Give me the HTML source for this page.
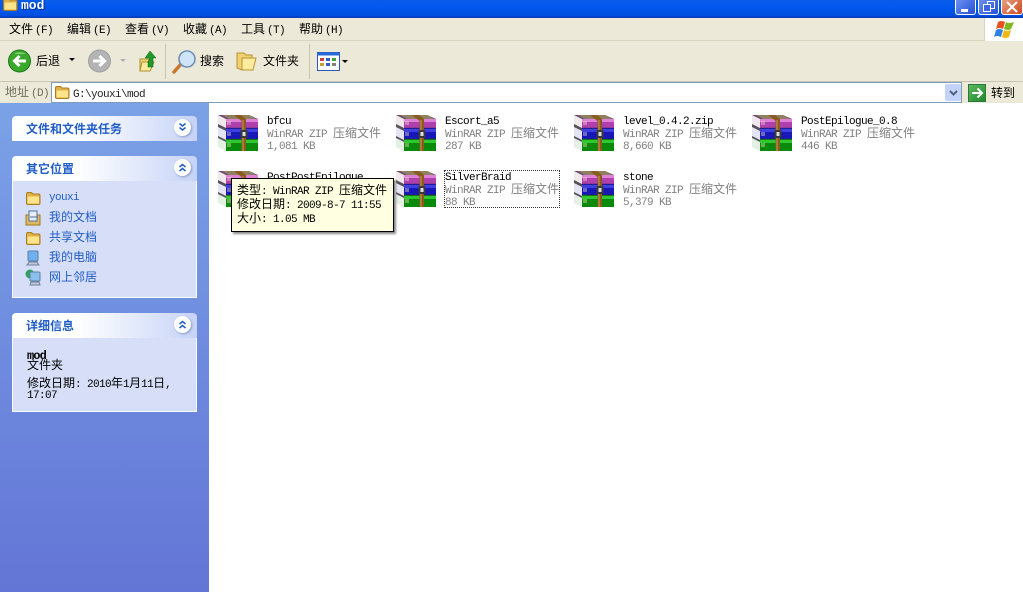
<!DOCTYPE html>
<html><head><meta charset="utf-8">
<style>
html,body{margin:0;padding:0}
body{width:1023px;height:592px;position:relative;overflow:hidden;background:#fff;font-family:"Liberation Mono","Noto Sans CJK SC",monospace;font-size:11px;letter-spacing:-.6px;color:#000}
.a{position:absolute;white-space:nowrap}
i{font-style:normal;font-size:12px;letter-spacing:0;font-family:"Noto Sans CJK SC","WenQuanYi Zen Hei",sans-serif}
.t{line-height:12px}
.m i{margin-right:2px}
svg{position:absolute;overflow:visible}
.panel{position:absolute;left:12px;width:185px}
.head{height:25px;border-radius:4px 4px 0 0;background:linear-gradient(90deg,#fff 0%,#fff 35%,#c6d3f7 100%);position:relative}
.head b{position:absolute;left:14px;top:4px;letter-spacing:0;font:bold 12px/17px "Noto Sans CJK SC","WenQuanYi Zen Hei",sans-serif;color:#215dc6}
.body{background:#d6dff7;border:1px solid #fff;border-top:0;box-sizing:border-box}
.btn{position:absolute;right:6px;top:3px;width:17px;height:17px;border-radius:50%;background:#fff;box-shadow:1px 1px 2px #8a9ac8;border:0}
.btn svg{left:0;top:0}
.gray{color:#808080}
.link{position:absolute;left:36px;color:#215dc6;line-height:14px}
</style></head><body>
<svg width="0" height="0" style="position:absolute"><defs>
<symbol id="rar" viewBox="0 0 42 38">
<path d="M1 1H32L41 5V14H9Z" fill="#6a4a70"/>
<path d="M5 1H32L39 5H12Z" fill="#8f8060"/>
<path d="M9 5H41V14H9Z" fill="#b040b0"/><path d="M9 5H41V8H9Z" fill="#e080d8"/>
<path d="M1 1L9 5V14L1 10Z" fill="#f0e8ea"/>
<path d="M1 13L9 17V26L1 22Z" fill="#e4e4f4"/>
<path d="M9 14H41V25H9Z" fill="#1818b8"/><path d="M9 15H41V18H9Z" fill="#4040e0"/>
<path d="M1 10L9 14V17L1 13Z" fill="#56505a"/>
<path d="M1 24L9 28V37L1 33Z" fill="#e4f0e4"/>
<path d="M1 22L9 26V28L1 24Z" fill="#56505a"/>
<path d="M9 25H41V37H9Z" fill="#0a8a0a"/><path d="M9 26H41V29H9Z" fill="#30c830"/>
<path d="M9 14H41M9 25H41" stroke="#333" stroke-width=".6"/>
<path d="M11 7v4M13 7v4M11 18v4M13 18v4M11 29v4M13 29v4" stroke="#f0e8c0" stroke-width=".8"/>
<path d="M17 1L24 1L29 5L29 37H24.500L24.500 7Z" fill="#8a5a20"/>
<path d="M26 6V37" stroke="#c89a50" stroke-width="1"/>
<rect x="23.500" y="16" width="7" height="8" fill="#3a3a3a"/><rect x="25.500" y="18" width="3" height="4" fill="#ddd"/>
</symbol>
<symbol id="fold" viewBox="0 0 16 14">
<path d="M1.500 3Q1.500 1.500 3 1.500H6.500L8 3H13.500Q15 3 15 4.500V12Q15 13.500 13.500 13.500H3Q1.500 13.500 1.500 12Z" fill="#e0b048" stroke="#a87c20"/>
<path d="M2.500 5.500H14V12.500H2.500Z" fill="#fce48c"/>
</symbol>
</defs></svg>

<!-- title bar -->
<div class="a" style="left:0;top:0;width:1023px;height:18px;background:linear-gradient(#0a5be8,#0058ee 40%,#0050e0 85%,#0038b0)"></div>
<svg style="left:2px;top:-3px" width="16" height="14"><use href="#fold"/></svg>
<div class="a" style="left:21px;top:-1px;color:#fff;letter-spacing:0;font:bold 13px/14px 'Liberation Mono',monospace;text-shadow:1px 1px #0030a0">mod</div>
<div class="a" style="left:955px;top:0;width:19px;height:14px;background:linear-gradient(135deg,#6d90ee,#2350d8);border:1px solid #fff;border-top:0;border-radius:0 0 3px 3px"><div style="position:absolute;left:5px;top:9px;width:7px;height:3px;background:#fff"></div></div>
<div class="a" style="left:978px;top:0;width:19px;height:14px;background:linear-gradient(135deg,#6d90ee,#2350d8);border:1px solid #fff;border-top:0;border-radius:0 0 3px 3px"><div style="position:absolute;left:8px;top:1px;width:6px;height:6px;border:1px solid #fff"></div><div style="position:absolute;left:4px;top:4px;width:6px;height:6px;border:1px solid #fff;background:#3c64dc"></div></div>
<div class="a" style="left:1001px;top:0;width:20px;height:14px;background:linear-gradient(135deg,#e8a080,#d04820);border:1px solid #fff;border-top:0;border-radius:0 0 3px 3px"><svg style="left:4px;top:1px" width="12" height="12"><path d="M1 1L11 11M11 1L1 11" stroke="#fff" stroke-width="2"/></svg></div>

<!-- menu bar -->
<div class="a" style="left:0;top:18px;width:1023px;height:22px;background:#ece9d8;border-bottom:1px solid #d8d4c0"></div>
<div class="a t m" style="left:9px;top:23px"><i>文件</i>(F)</div>
<div class="a t m" style="left:67px;top:23px"><i>编辑</i>(E)</div>
<div class="a t m" style="left:125px;top:23px"><i>查看</i>(V)</div>
<div class="a t m" style="left:183px;top:23px"><i>收藏</i>(A)</div>
<div class="a t m" style="left:241px;top:23px"><i>工具</i>(T)</div>
<div class="a t m" style="left:299px;top:23px"><i>帮助</i>(H)</div>
<div class="a" style="left:984px;top:18px;width:39px;height:23px;background:#fff;border-left:1px solid #d8d4c0;box-sizing:border-box"></div>
<svg style="left:994px;top:20px" width="20" height="18"><path d="M4 2Q7 0 11 2L9 9Q5 7 2 9Z" fill="#e85020"/><path d="M12 2Q15 4 20 2L17 9Q14 11 10 9Z" fill="#80b820"/><path d="M2 10Q5 8 9 10L7 17Q3 15 0 17Z" fill="#3080e0"/><path d="M10 10Q13 12 17 10L15 17Q11 19 8 17Z" fill="#f0b810"/></svg>

<!-- toolbar -->
<div class="a" style="left:0;top:41px;width:1023px;height:40px;background:#ece9d8;border-bottom:1px solid #c8c4b0"></div>
<svg style="left:8px;top:49px" width="24" height="24"><circle cx="11.500" cy="12" r="11" fill="#3aa82a" stroke="#1c7a1c"/><path d="M6 5a10 8 0 0 1 12 0" fill="#a8e090" opacity=".7"/><path d="M18 12H7M11.500 7L6.500 12L11.500 17" stroke="#fff" stroke-width="3" fill="none"/></svg>
<div class="a t" style="left:36px;top:55px"><i>后退</i></div>
<svg style="left:69px;top:58px" width="7" height="5"><path d="M0 0H6L3 3Z" fill="#000"/></svg>
<svg style="left:88px;top:49px" width="24" height="24"><circle cx="11.500" cy="12" r="11" fill="#b4b4b4" stroke="#a0a0a0"/><path d="M5 12H16M11.500 7L16.500 12L11.500 17" stroke="#fff" stroke-width="3" fill="none"/></svg>
<svg style="left:120px;top:59px" width="7" height="5"><path d="M0 0H6L3 3Z" fill="#b0b0b0"/></svg>
<svg style="left:138px;top:49px" width="20" height="24"><path d="M2 10H10L12 12V22H2Z" fill="#f0d878" stroke="#b09030"/><path d="M4 13H16L12 22H2Z" fill="#fbeb9c" stroke="#b09030"/><path d="M12 2L18 9H15V18H10V12H11V9H7Z" fill="#1f9a28" stroke="#106018" stroke-width=".5"/></svg>
<div class="a" style="left:165px;top:44px;width:1px;height:35px;background:#c8c4b0"></div>
<svg style="left:171px;top:49px" width="26" height="25"><path d="M3 23L10 15" stroke="#c87830" stroke-width="3.500" stroke-linecap="round"/><circle cx="16" cy="10" r="8" fill="#d0e4f8" stroke="#7090b8" stroke-width="1.600"/></svg>
<div class="a t" style="left:200px;top:55px"><i>搜索</i></div>
<svg style="left:236px;top:51px" width="22" height="21"><path d="M1 2H8L10 4H16V16L6 19L1 17Z" fill="#f0d070" stroke="#b89430"/><path d="M6 7H20L17 19H6Z" fill="#fdeca0" stroke="#b89430"/></svg>
<div class="a t" style="left:263px;top:55px"><i>文件夹</i></div>
<div class="a" style="left:309px;top:44px;width:1px;height:35px;background:#c8c4b0"></div>
<svg style="left:317px;top:52px" width="24" height="20"><rect x=".5" y=".5" width="22" height="18" fill="#fff" stroke="#2a5ab8"/><rect x=".5" y=".5" width="22" height="3" fill="#2a6ad8"/><path d="M3 6h4v3H3z" fill="#c84040"/><path d="M9 6h4v3H9z" fill="#3060c8"/><path d="M15 6h4v3h-4z" fill="#40a040"/><path d="M3 11h4v3H3z" fill="#c8a030"/><path d="M9 11h4v3H9z" fill="#3060c8"/><path d="M15 11h4v3h-4z" fill="#808080"/></svg>
<svg style="left:342px;top:60px" width="7" height="5"><path d="M0 0H6L3 3Z" fill="#000"/></svg>

<!-- address bar -->
<div class="a" style="left:0;top:82px;width:1023px;height:21px;background:#ece9d8"></div>
<div class="a t m" style="left:5px;top:86px;color:#6f6f60"><i>地址</i>(D)</div>
<div class="a" style="left:51px;top:82px;width:911px;height:21px;background:#fff;border:1px solid #7f9db9;box-sizing:border-box"></div>
<svg style="left:54px;top:85px" width="16" height="14"><use href="#fold"/></svg>
<div class="a t" style="left:73px;top:89px;color:#222">G:\youxi\mod</div>
<div class="a" style="left:945px;top:84px;width:16px;height:17px;background:#c3d3f8;border-radius:2px"><svg style="left:4px;top:6px" width="9" height="6"><path d="M1 1L4.500 4.500L8 1" stroke="#4d6185" stroke-width="2" fill="none"/></svg></div>
<div class="a" style="left:968px;top:84px;width:18px;height:18px;background:linear-gradient(135deg,#5fb85f,#1f8a2f);border:1px solid #2a7a3a;box-sizing:border-box"><svg style="left:2px;top:2px" width="13" height="12"><path d="M1 6H11M6.500 1.500L11 6L6.500 10.500" stroke="#fff" stroke-width="2" fill="none"/></svg></div>
<div class="a t" style="left:991px;top:87px"><i>转到</i></div>

<!-- sidebar -->
<div class="a" style="left:0;top:103px;width:209px;height:489px;background:linear-gradient(#7ba2e7,#6375d6)"></div>

<div class="panel" style="top:116px">
<div class="head"><b>文件和文件夹任务</b><div class="btn"><svg width="17" height="17"><path d="M5.500 4.500L8.500 7L11.500 4.500M5.500 8.500L8.500 11L11.500 8.500" stroke="#215dc6" stroke-width="1.500" fill="none"/></svg></div></div>
</div>

<div class="panel" style="top:156px">
<div class="head"><b>其它位置</b><div class="btn"><svg width="17" height="17"><path d="M5.500 8L8.500 5.500L11.500 8M5.500 12L8.500 9.500L11.500 12" stroke="#215dc6" stroke-width="1.500" fill="none"/></svg></div></div>
<div class="body" style="height:117px;position:relative">
<svg style="left:12px;top:10px" width="16" height="14"><use href="#fold"/></svg>
<div class="link" style="top:10px">youxi</div>
<svg style="left:12px;top:29px" width="16" height="16"><path d="M1 5H15V15H1Z" fill="#e0b860" stroke="#a07820"/><path d="M4 1H12V11H4Z" fill="#e8eef8" stroke="#5070a0"/><path d="M5 7H13" stroke="#5070a0"/></svg>
<div class="link" style="top:29px"><i>我的文档</i></div>
<svg style="left:12px;top:50px" width="16" height="14"><use href="#fold"/></svg>
<div class="link" style="top:49px"><i>共享文档</i></div>
<svg style="left:13px;top:69px" width="14" height="16"><rect x="2" y="1" width="10" height="10" rx="1" fill="#6eb0f0" stroke="#6080a0"/><path d="M3 12H11L13 15H1Z" fill="#c0c8d8" stroke="#7080a0"/></svg>
<div class="link" style="top:69px"><i>我的电脑</i></div>
<svg style="left:12px;top:88px" width="16" height="17"><circle cx="5" cy="5" r="4.500" fill="#30a060"/><rect x="5" y="3" width="10" height="9" rx="1" fill="#88c0f0" stroke="#6080a0"/><path d="M6 13H14L15 16H5Z" fill="#c0c8d8" stroke="#7080a0"/></svg>
<div class="link" style="top:89px"><i>网上邻居</i></div>
</div>
</div>

<div class="panel" style="top:313px">
<div class="head"><b>详细信息</b><div class="btn"><svg width="17" height="17"><path d="M5.500 8L8.500 5.500L11.500 8M5.500 12L8.500 9.500L11.500 12" stroke="#215dc6" stroke-width="1.500" fill="none"/></svg></div></div>
<div class="body" style="height:74px;position:relative">
<div class="a" style="left:14px;top:12px;font-weight:bold;line-height:12px;font-size:12px;letter-spacing:-.9px">mod</div>
<div class="a t" style="left:14px;top:21px"><i>文件夹</i></div>
<div class="a t" style="left:14px;top:39px"><i>修改日期</i>: 2010<i>年</i>1<i>月</i>11<i>日</i>,</div>
<div class="a t" style="left:14px;top:52px">17:07</div>
</div>
</div>

<!-- files -->
<svg style="left:217px;top:114px" width="42" height="38"><use href="#rar"/></svg>
<div class="a t" style="left:267px;top:116px">bfcu</div>
<div class="a t gray" style="left:267px;top:127px">WinRAR ZIP <i>压缩文件</i></div>
<div class="a t gray" style="left:267px;top:141px">1,081 KB</div>

<svg style="left:395px;top:114px" width="42" height="38"><use href="#rar"/></svg>
<div class="a t" style="left:445px;top:116px">Escort_a5</div>
<div class="a t gray" style="left:445px;top:127px">WinRAR ZIP <i>压缩文件</i></div>
<div class="a t gray" style="left:445px;top:141px">287 KB</div>

<svg style="left:573px;top:114px" width="42" height="38"><use href="#rar"/></svg>
<div class="a t" style="left:623px;top:116px">level_0.4.2.zip</div>
<div class="a t gray" style="left:623px;top:127px">WinRAR ZIP <i>压缩文件</i></div>
<div class="a t gray" style="left:623px;top:141px">8,660 KB</div>

<svg style="left:751px;top:114px" width="42" height="38"><use href="#rar"/></svg>
<div class="a t" style="left:801px;top:116px">PostEpilogue_0.8</div>
<div class="a t gray" style="left:801px;top:127px">WinRAR ZIP <i>压缩文件</i></div>
<div class="a t gray" style="left:801px;top:141px">446 KB</div>

<svg style="left:217px;top:170px" width="42" height="38"><use href="#rar"/></svg>
<div class="a t" style="left:267px;top:172px">PostPostEpilogue</div>

<svg style="left:395px;top:170px" width="42" height="38"><use href="#rar"/></svg>
<div class="a" style="left:444px;top:170px;width:116px;height:38px;border:1px dotted #333;box-sizing:border-box"></div>
<div class="a t" style="left:445px;top:172px">SilverBraid</div>
<div class="a t gray" style="left:445px;top:183px">WinRAR ZIP <i>压缩文件</i></div>
<div class="a t gray" style="left:445px;top:197px">88 KB</div>

<svg style="left:573px;top:170px" width="42" height="38"><use href="#rar"/></svg>
<div class="a t" style="left:623px;top:172px">stone</div>
<div class="a t gray" style="left:623px;top:183px">WinRAR ZIP <i>压缩文件</i></div>
<div class="a t gray" style="left:623px;top:197px">5,379 KB</div>

<!-- tooltip -->
<div class="a" style="left:231px;top:178px;width:163px;height:54px;background:#ffffe1;border:1px solid #000;box-sizing:border-box;box-shadow:2px 2px 2px #888"></div>
<div class="a t" style="left:237px;top:184px"><i>类型</i>: WinRAR ZIP <i>压缩文件</i></div>
<div class="a t" style="left:237px;top:198px"><i>修改日期</i>: 2009-8-7 11:55</div>
<div class="a t" style="left:237px;top:212px"><i>大小</i>: 1.05 MB</div>
</body></html>
